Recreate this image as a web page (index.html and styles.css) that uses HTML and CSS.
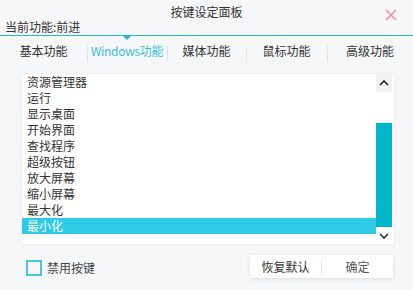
FILE: index.html
```html
<!DOCTYPE html>
<html lang="zh-CN">
<head>
    <meta charset="UTF-8">
    <title>按键设定面板</title>
    <link rel="stylesheet" href="styles.css">
</head>
<body>
    <div class="panel">
        <div class="header">
            <div class="title">按键设定面板</div>
            <div class="current">当前功能:前进</div>
            <button class="close" type="button">
                <svg width="12" height="12" viewBox="0 0 12 12">
                    <path d="M1 1 L11 11 M11 1 L1 11" stroke="#f0909a" stroke-width="1.6" fill="none"/>
                </svg>
            </button>
        </div>

        <div class="tabs">
            <div class="tab t1">基本功能</div>
            <div class="tab t2 active">Windows功能</div>
            <div class="tab t3">媒体功能</div>
            <div class="tab t4">鼠标功能</div>
            <div class="tab t5">高级功能</div>
        </div>

        <div class="list-box">
            <ul class="items">
                <li>资源管理器</li>
                <li>运行</li>
                <li>显示桌面</li>
                <li>开始界面</li>
                <li>查找程序</li>
                <li>超级按钮</li>
                <li>放大屏幕</li>
                <li>缩小屏幕</li>
                <li>最大化</li>
                <li class="selected">最小化</li>
            </ul>
            <div class="scrollbar">
                <div class="arrow up">
                    <svg width="10" height="6" viewBox="0 0 10 6"><path d="M1 5 L5 1 L9 5" stroke="#1a1a1a" stroke-width="1.5" fill="none"/></svg>
                </div>
                <div class="track">
                    <div class="thumb"></div>
                </div>
                <div class="arrow down">
                    <svg width="10" height="6" viewBox="0 0 10 6"><path d="M1 1 L5 5 L9 1" stroke="#1a2a3a" stroke-width="1.5" fill="none"/></svg>
                </div>
            </div>
        </div>

        <div class="footer">
            <label class="check">
                <span class="box"></span>
                <span>禁用按键</span>
            </label>
            <div class="actions">
                <button type="button" class="btn">恢复默认</button>
                <span class="sep"></span>
                <button type="button" class="btn ok">确定</button>
            </div>
        </div>
    </div>
</body>
</html>
```

FILE: styles.css
```css
body {
    margin: 0;
    padding: 0;
    background-color: #f6f7f9;
    color: #333333;
    font-family: "Noto Sans CJK SC", "Liberation Sans", sans-serif;
    font-size: 12px;
}
.panel {
    width: 413px;
    height: 290px;
    overflow: hidden;
}
.header {
    position: relative;
    height: 35px;
    border-bottom: 1px solid #2ab4c6;
}
.title {
    padding-top: 3px;
    height: 17px;
    line-height: 17px;
    text-align: center;
    color: #333333;
}
.current {
    padding-left: 5px;
    height: 14px;
    line-height: 14px;
    color: #333333;
}
.close {
    position: absolute;
    top: 9px;
    right: 16px;
    width: 12px;
    height: 12px;
    padding: 0;
    border: none;
    background: none;
    line-height: 0;
}
.tabs {
    display: flex;
    height: 30px;
}
.tab {
    position: relative;
    display: flex;
    align-items: center;
    justify-content: center;
    padding-bottom: 2px;
    color: #333333;
}
.tab + .tab::before {
    content: "";
    position: absolute;
    left: 0;
    top: 10px;
    height: 16px;
    border-left: 1px solid #e2e5e8;
}
.t1 { width: 87px; }
.t2 { width: 80px; }
.t3 { width: 79px; }
.t4 { width: 81px; }
.t5 { width: 86px; }
.tab.active {
    color: #3cc1d4;
    letter-spacing: -0.3px;
}
.tab.active::after {
    content: "";
    position: absolute;
    top: 0;
    left: 36px;
    border-left: 4px solid transparent;
    border-right: 4px solid transparent;
    border-top: 4px solid #2ab4c6;
}
.list-box {
    display: flex;
    margin: 7px 0 0 21px;
    width: 370px;
    height: 170px;
    background-color: #ffffff;
    border: 1px solid #eef0f2;
    padding-right: 2px;
}
.items {
    flex: 1;
    list-style: none;
    margin: 0;
    padding: 0;
}
.items li {
    height: 16px;
    line-height: 16px;
    padding-left: 5px;
    color: #333333;
}
.items li.selected {
    background-color: #2fcbe6;
    color: #ffffff;
}
.scrollbar {
    width: 16px;
    display: flex;
    flex-direction: column;
}
.arrow {
    display: flex;
    align-items: center;
    justify-content: center;
}
.arrow.up {
    height: 19px;
    background-color: #f0f1f2;
}
.arrow.down {
    height: 17px;
}
.track {
    flex: 1;
    padding-top: 31px;
}
.thumb {
    height: 104px;
    background-color: #00b6c9;
}
.footer {
    display: flex;
    align-items: center;
    justify-content: space-between;
    padding: 10px 20px 0 26px;
}
.check {
    display: flex;
    align-items: center;
    gap: 5px;
    color: #444444;
    margin-top: 2px;
}
.box {
    width: 12px;
    height: 12px;
    border: 2px solid #4ac7d8;
}
.actions {
    display: flex;
    align-items: center;
    width: 143px;
    height: 23px;
    background-color: #ffffff;
    box-shadow: 0 1px 4px rgba(0, 0, 0, 0.12);
}
.btn {
    flex: 1;
    height: 23px;
    padding: 0;
    border: none;
    background: none;
    font-family: "Noto Sans CJK SC", "Liberation Sans", sans-serif;
    font-size: 12px;
    color: #333333;
}
.btn.ok {
    color: #555555;
}
.sep {
    height: 15px;
    border-left: 1px solid #e4e6e8;
}
```
